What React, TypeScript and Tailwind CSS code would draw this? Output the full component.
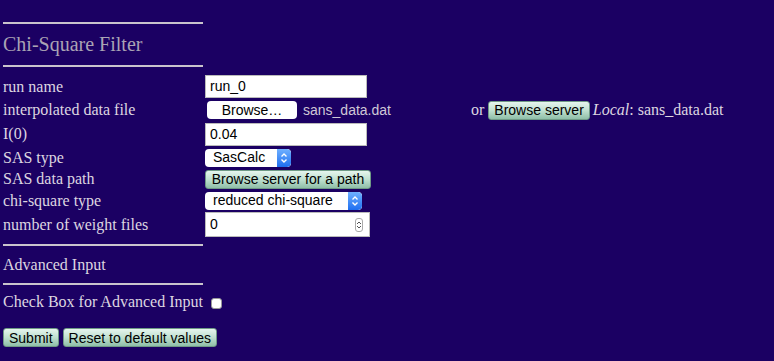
import React from "react";

const serif = { fontFamily: '"Liberation Serif", "Times New Roman", serif' };
const sans = { fontFamily: '"Liberation Sans", Arial, sans-serif' };

function GreenButton({ children, className = "" }: { children: React.ReactNode; className?: string }) {
  return (
    <button
      style={sans}
      className={`h-[19px] rounded-[3px] border border-[#6f9a86] bg-gradient-to-b from-[#e6f5ee] via-[#bfe0d0] to-[#8fbfa8] px-[5px] text-[14px] leading-none text-black ${className}`}
    >
      {children}
    </button>
  );
}

function SelectBox({ value, width }: { value: string; width: string }) {
  return (
    <div style={sans} className={`flex h-[18px] ${width} items-stretch overflow-hidden rounded-[4px] bg-white`}>
      <span className="flex flex-1 items-center pl-[8px] text-[14px] text-black">{value}</span>
      <span className="flex w-[14px] flex-col items-center justify-center rounded-r-[4px] bg-gradient-to-b from-[#6fb0ff] to-[#1c6ef0]">
        <svg width="8" height="12" viewBox="0 0 8 12" fill="none" stroke="white" strokeWidth="1.4">
          <path d="M1.5 4.5 L4 2 L6.5 4.5" />
          <path d="M1.5 7.5 L4 10 L6.5 7.5" />
        </svg>
      </span>
    </div>
  );
}

function Label({ children }: { children: React.ReactNode }) {
  return <span className="w-[202px] shrink-0 text-[16px] leading-none text-[#ddd6e0]">{children}</span>;
}

export default function App() {
  return (
    <div style={serif} className="h-[361px] w-[774px] overflow-hidden bg-[#1b0063] pl-[3px] pt-[22px]">
      <div className="w-[200px] border-t-2 border-[#c9c3cc]" />
      <h3 className="flex h-[41px] items-center pb-[2px] text-[20px] leading-none text-[#aaa3b4]">Chi-Square Filter</h3>
      <div className="w-[200px] border-t-2 border-[#c9c3cc]" />

      <div className="mt-[7px] flex flex-col">
        <div className="flex h-[25px] items-center">
          <Label>run name</Label>
          <div style={sans} className="flex h-[23px] w-[162px] items-center border border-[#bbb] bg-white pl-[4px] text-[14px] text-black">
            run_0
          </div>
        </div>

        <div className="flex h-[22px] items-center">
          <Label>interpolated data file</Label>
          <div className="flex w-[266px] items-center">
            <span style={sans} className="ml-[2px] flex h-[18px] w-[90px] items-center justify-center rounded-[4px] bg-white text-[14px] text-black">
              Browse…
            </span>
            <span style={sans} className="ml-[6px] text-[14px] text-[#cfc8d6]">sans_data.dat</span>
          </div>
          <span className="text-[16px] text-[#ddd6e0]">or</span>
          <GreenButton className="ml-[4px]">Browse server</GreenButton>
          <span className="ml-[3px] text-[16px] text-[#ddd6e0]">
            <i>Local</i>: sans_data.dat
          </span>
        </div>

        <div className="flex h-[26px] items-center">
          <Label>I(0)</Label>
          <div style={sans} className="flex h-[23px] w-[162px] items-center border border-[#bbb] bg-white pl-[4px] text-[14px] text-black">
            0.04
          </div>
        </div>

        <div className="flex h-[21px] items-center">
          <Label>SAS type</Label>
          <SelectBox value="SasCalc" width="w-[86px]" />
        </div>

        <div className="flex h-[22px] items-center">
          <Label>SAS data path</Label>
          <GreenButton className="w-[166px]">Browse server for a path</GreenButton>
        </div>

        <div className="flex h-[21px] items-center">
          <Label>chi-square type</Label>
          <SelectBox value="reduced chi-square" width="w-[157px]" />
        </div>

        <div className="flex h-[27px] items-center">
          <Label>number of weight files</Label>
          <div style={sans} className="flex h-[25px] w-[165px] items-center justify-between border border-[#bbb] bg-white pl-[4px] pr-[6px] text-[14px] text-black">
            <span>0</span>
            <span className="flex h-[14px] w-[8px] flex-col items-center justify-center rounded-[3px] border border-[#aaa]">
              <svg width="6" height="10" viewBox="0 0 6 10" fill="none" stroke="#555" strokeWidth="1">
                <path d="M1 4 L3 2 L5 4" />
                <path d="M1 6 L3 8 L5 6" />
              </svg>
            </span>
          </div>
        </div>
      </div>

      <div className="mt-[6px] w-[200px] border-t-2 border-[#c9c3cc]" />
      <div className="flex h-[37px] items-center text-[16px] leading-none text-[#ddd6e0]">Advanced Input</div>
      <div className="w-[200px] border-t-2 border-[#c9c3cc]" />

      <div className="mt-[6px] flex h-[22px] items-center text-[16px] leading-none text-[#ddd6e0]">
        <span>Check Box for Advanced Input</span>
        <span className="ml-[8px] mt-[3px] h-[11px] w-[11px] rounded-[3px] border border-[#999] bg-white" />
      </div>

      <div className="mt-[15px] flex gap-[4px]">
        <GreenButton>Submit</GreenButton>
        <GreenButton>Reset to default values</GreenButton>
      </div>
    </div>
  );
}
